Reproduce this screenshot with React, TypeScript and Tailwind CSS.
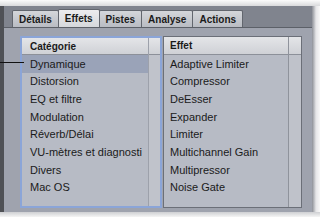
import React from 'react';

const tabs = ['Détails', 'Effets', 'Pistes', 'Analyse', 'Actions'];
const categories = ['Dynamique', 'Distorsion', 'EQ et filtre', 'Modulation', 'Réverb/Délai', 'VU-mètres et diagnosti', 'Divers', 'Mac OS'];
const effects = ['Adaptive Limiter', 'Compressor', 'DeEsser', 'Expander', 'Limiter', 'Multichannel Gain', 'Multipressor', 'Noise Gate'];

const App: React.FC = () => {
  return (
    <div className="w-[320px] h-[217px] overflow-hidden bg-[#f3f3f3] flex flex-col font-['Liberation_Sans',Arial,sans-serif] text-[11px] text-[#1a1a1a] relative">
      <div className="h-[6px] bg-gradient-to-b from-[#fbfbfb] to-[#d9dadc]" />
      <div className="flex-1 flex">
        <div className="w-[4px] bg-[#4f5156]" />
        <div className="w-[308px] flex flex-col bg-[#80848e]">
          {/* tab strip */}
          <div className="h-[21px] flex items-end pl-[8px]">
            {tabs.map((t) => (
              <div
                key={t}
                className={
                  t === 'Effets'
                    ? 'h-[18px] px-[6px] flex items-center text-[10px] font-bold border border-b-0 border-[#62666e] bg-gradient-to-b from-[#ececee] to-[#d6d8dc] rounded-t-[2px] -ml-px'
                    : 'h-[17px] px-[6px] flex items-center text-[10px] font-bold border border-b-0 border-[#62666e] bg-gradient-to-b from-[#d4d6da] to-[#b9bcc3] rounded-t-[2px] -ml-px first:ml-0'
                }
              >
                {t}
              </div>
            ))}
          </div>
          {/* panel */}
          <div className="flex-1 border-t border-[#5c6068] bg-[#9fa3ae] flex pl-[16px] pt-[8px] pb-[4px]">
            {/* category list */}
            <div className="w-[142px] border-2 border-[#8ba5d8] bg-[#b7bbc5] flex">
              <div className="flex-1 flex flex-col">
                <div className="h-[17px] bg-gradient-to-b from-[#e4e5e8] to-[#cfd1d6] border-b border-[#8c9099] text-[10px] font-bold pl-[8px] flex items-center">
                  Catégorie
                </div>
                {categories.map((c, i) => (
                  <div
                    key={c}
                    className={`h-[17.7px] pl-[8px] flex items-center whitespace-nowrap overflow-hidden ${i === 0 ? 'bg-[#9aa3b8]' : ''}`}
                  >
                    {c}
                  </div>
                ))}
              </div>
              <div className="w-[12px] flex flex-col border-l border-[#9da1ab] bg-[#c0c3cb]">
                <div className="h-[17px] bg-gradient-to-b from-[#e4e5e8] to-[#cfd1d6] border-b border-[#8c9099]" />
              </div>
            </div>
            {/* effect list */}
            <div className="ml-px w-[139px] border border-[#6b6f78] bg-[#b7bbc5] flex">
              <div className="flex-1 flex flex-col">
                <div className="h-[18px] bg-gradient-to-b from-[#e4e5e8] to-[#cfd1d6] border-b border-[#8c9099] text-[10px] font-bold pl-[6px] flex items-center">
                  Effet
                </div>
                {effects.map((e) => (
                  <div key={e} className="h-[17.7px] pl-[6px] flex items-center whitespace-nowrap">
                    {e}
                  </div>
                ))}
              </div>
              <div className="w-[13px] flex flex-col border-l border-[#8f939c] bg-[#bfc2ca]">
                <div className="h-[18px] bg-gradient-to-b from-[#e4e5e8] to-[#cfd1d6] border-b border-[#8c9099]" />
              </div>
            </div>
          </div>
        </div>
        <div className="flex-1 bg-gradient-to-r from-[#8d9097] via-[#e6e6e8] to-[#f8f8f8]" />
      </div>
      <div className="h-[5px] bg-gradient-to-b from-[#cfd0d3] to-[#f5f5f5]" />
      {/* callout line */}
      <div className="absolute left-0 top-[62px] w-[24px] h-px bg-[#111]" />
    </div>
  );
};

export default App;
